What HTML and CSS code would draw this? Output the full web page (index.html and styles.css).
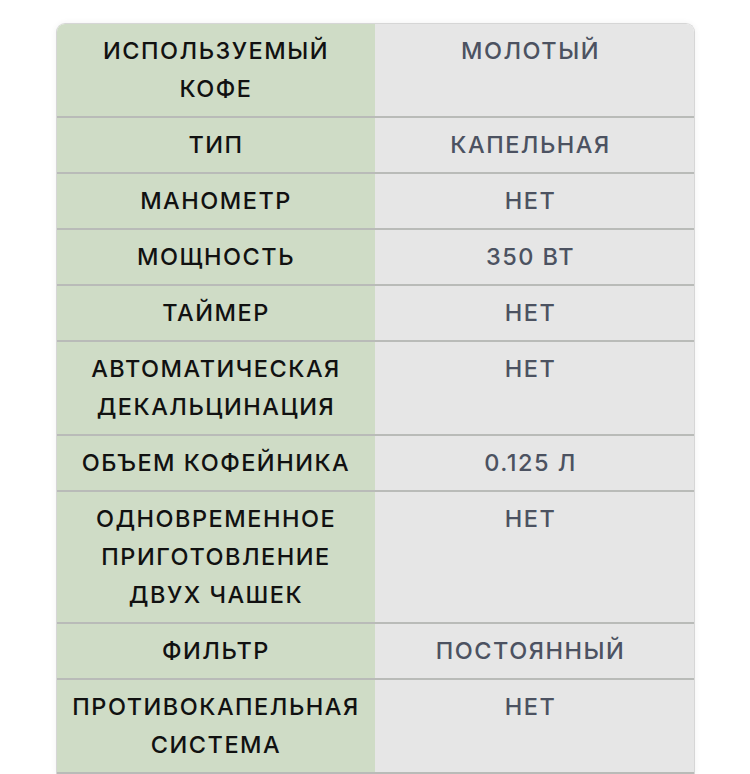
FILE: index.html
```html
<!DOCTYPE html>
<html lang="ru">
<head>
<meta charset="utf-8">
<link rel="stylesheet" href="styles.css">
</head>
<body>
<div class="page">
  <div class="specs">
    <div class="row"><div class="k">ИСПОЛЬЗУЕМЫЙ<br>КОФЕ</div><div class="v">МОЛОТЫЙ</div></div>
    <div class="row"><div class="k">ТИП</div><div class="v">КАПЕЛЬНАЯ</div></div>
    <div class="row"><div class="k">МАНОМЕТР</div><div class="v">НЕТ</div></div>
    <div class="row"><div class="k">МОЩНОСТЬ</div><div class="v">350 ВТ</div></div>
    <div class="row"><div class="k">ТАЙМЕР</div><div class="v">НЕТ</div></div>
    <div class="row"><div class="k">АВТОМАТИЧЕСКАЯ<br>ДЕКАЛЬЦИНАЦИЯ</div><div class="v">НЕТ</div></div>
    <div class="row"><div class="k">ОБЪЕМ КОФЕЙНИКА</div><div class="v">0.125 Л</div></div>
    <div class="row"><div class="k">ОДНОВРЕМЕННОЕ<br>ПРИГОТОВЛЕНИЕ<br>ДВУХ ЧАШЕК</div><div class="v">НЕТ</div></div>
    <div class="row"><div class="k">ФИЛЬТР</div><div class="v">ПОСТОЯННЫЙ</div></div>
    <div class="row"><div class="k">ПРОТИВОКАПЕЛЬНАЯ<br>СИСТЕМА</div><div class="v">НЕТ</div></div>
  </div>
</div>
</body>
</html>
```
FILE: styles.css
```css
html, body {
  margin: 0;
  background: #ffffff;
}
.page {
  padding: 23px 0 0 56px;
  height: 774px;
  box-sizing: border-box;
  overflow: hidden;
}
.specs {
  width: 637px;
  border: 1px solid #d6d6d6;
  border-bottom: none;
  border-radius: 9px 9px 0 0;
  overflow: hidden;
  box-shadow: 0 0 6px rgba(0,0,0,0.06);
  font-family: "Inter", "Noto Sans", sans-serif;
  font-size: 23.5px;
  font-weight: 500;
  letter-spacing: 1.5px;
}
.row {
  display: grid;
  grid-template-columns: 318px 1fr;
  border-bottom: 2px solid #b9bbb8;
}
.k, .v {
  padding: 8px 4px;
  line-height: 38px;
  text-align: center;
}
.k {
  background: #cfdcc6;
  color: #111111;
}
.v {
  background: #e6e6e6;
  color: #4c5261;
  padding-right: 12px;
}
```
